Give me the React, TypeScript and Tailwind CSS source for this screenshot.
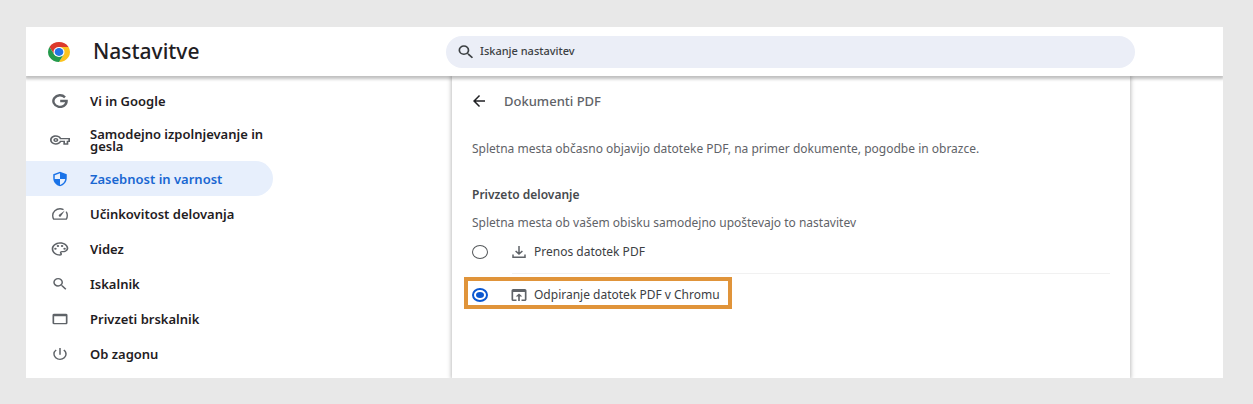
import type { ComponentType } from "react";
import clsx from "clsx";
import {
  MdArrowBack,
  MdOpenInBrowser,
  MdOutlinePalette,
  MdOutlineVpnKey,
  MdPowerSettingsNew,
  MdSearch,
  MdSecurity,
  MdWebAsset,
} from "react-icons/md";

interface IconProps {
  className?: string;
  preserveAspectRatio?: string;
}

interface NavItem {
  label: string;
  icon: ComponentType<IconProps>;
  iconClass: string;
  active?: boolean;
  tall?: boolean;
}

const DownloadIcon = ({ className }: IconProps) => (
  <svg
    viewBox="0 0 14 13"
    preserveAspectRatio="none"
    className={className}
    fill="none"
    stroke="currentColor"
    strokeWidth="1.5"
  >
    <path d="M7 0v8.6M3.6 5.4 7 8.7l3.4-3.3M1 9.2v3h12v-3" />
  </svg>
);

const GoogleIcon = ({ className }: IconProps) => (
  <svg
    viewBox="0 0 16 14"
    preserveAspectRatio="none"
    className={className}
    fill="none"
    stroke="currentColor"
    strokeWidth="2.4"
  >
    <path d="M13 3.300A6.600 5.800 0 1 0 14.600 7H8.200" />
  </svg>
);

const GaugeIcon = ({ className }: IconProps) => (
  <svg
    viewBox="0 0 16 12"
    className={className}
    fill="none"
    stroke="currentColor"
    strokeWidth="1.4"
    strokeLinecap="round"
    strokeLinejoin="round"
  >
    <path d="M11 1.4C10 .9 9 .7 8 .7 4 .7.7 3.700.7 7.400c0 1.400.3 2.500 1 3.700h12.600c.7-1.200 1-2.300 1-3.700 0-1.200-.3-2.200-.9-3.200" />
    <path d="M12.800 2.600 8.900 8.300a1.200 1.200 0 1 1-1.900-1.500z" fill="currentColor" stroke="none" />
  </svg>
);

const ChromeLogo = ({ className }: IconProps) => (
  <svg viewBox="0 0 48 48" preserveAspectRatio="none" className={className}>
    <path d="M24 12h20.780A24 24 0 0 0 3.220 12l10.390 18z" fill="#dc3a2c" />
    <path d="M34.390 30 24 48a24 24 0 0 0 20.780-36H24z" fill="#fcc31e" />
    <path d="M13.610 30 3.220 12A24 24 0 0 0 24 48l10.390-18z" fill="#249a4b" />
    <circle cx="24" cy="24" r="12" fill="#fff" />
    <circle cx="24" cy="24" r="9.500" fill="#2374e4" />
  </svg>
);

const navItems: NavItem[] = [
  { label: "Vi in Google", icon: GoogleIcon, iconClass: "h-3.5 w-4" },
  {
    label: "Samodejno izpolnjevanje in gesla",
    icon: MdOutlineVpnKey,
    iconClass: "h-4 w-5",
    tall: true,
  },
  {
    label: "Zasebnost in varnost",
    icon: MdSecurity,
    iconClass: "h-4 w-[18px]",
    active: true,
  },
  { label: "Učinkovitost delovanja", icon: GaugeIcon, iconClass: "h-3 w-4" },
  { label: "Videz", icon: MdOutlinePalette, iconClass: "h-4 w-5" },
  { label: "Iskalnik", icon: MdSearch, iconClass: "h-4 w-[18px]" },
  { label: "Privzeti brskalnik", icon: MdWebAsset, iconClass: "h-4 w-5" },
  { label: "Ob zagonu", icon: MdPowerSettingsNew, iconClass: "h-4 w-[18px]" },
];

const radioClass =
  "h-3.5 w-4 shrink-0 appearance-none rounded-[50%] border border-[#55585b] bg-clip-content p-[2px] checked:border-2 checked:border-[#0b57d0] checked:bg-[#0b57d0]";

const App = () => {
  return (
    <div className="min-h-screen bg-[#e8e8e8] px-[26px] pt-[27px] pb-[26px] font-['Noto_Sans',sans-serif] text-[#1f2023]">
      <div className="mr-1 flex min-h-[351px] flex-col bg-white">
        {/* Header */}
        <header className="relative grid h-[49px] grid-cols-[420px_minmax(0,1fr)_88px] items-center shadow-[0_2px_3px_1px_rgba(0,0,0,0.25)] [clip-path:inset(0_0_-8px_0)]">
          <div className="flex items-center pl-[22px]">
            <ChromeLogo className="h-5 w-[22px]" />
            <h1 className="ml-[23px] text-[21px] font-medium">Nastavitve</h1>
          </div>
          <div className="flex h-8 items-center rounded-full bg-[#ebeef7] pl-2.5 text-[#3c4043]">
            <MdSearch preserveAspectRatio="none" className="h-[18px] w-5" />
            <input
              type="search"
              aria-label="Iskanje nastavitev"
              placeholder="Iskanje nastavitev"
              className="ml-1 min-w-0 flex-1 bg-transparent text-[11px] font-medium outline-none placeholder:text-[#3c4043]"
            />
          </div>
        </header>

        <div className="grid flex-1 grid-cols-[426px_minmax(0,1fr)_93px] overflow-hidden">
          {/* Sidebar */}
          <nav className="pt-[7px]">
            {navItems.map(({ label, icon: Icon, iconClass, active, tall }) => (
              <a
                key={label}
                href="#"
                className={clsx(
                  "flex w-[247px] items-center rounded-r-full text-[13px] leading-3 font-semibold",
                  tall ? "h-[43px]" : "h-[35px]",
                  active && "bg-[#e7effc] text-[#1967d2]"
                )}
              >
                <span
                  className={clsx(
                    "ml-6 flex w-5 shrink-0 justify-center",
                    active ? "text-[#1a73e8]" : "text-[#5f6368]"
                  )}
                >
                  <Icon preserveAspectRatio="none" className={iconClass} />
                </span>
                <span className="ml-5">{label}</span>
              </a>
            ))}
          </nav>

          {/* PDF documents */}
          <main className="bg-white pr-5 pl-5 text-xs leading-4 text-[#5f6368] shadow-[0_0_4px_1px_rgba(0,0,0,0.25)]">
            <div className="flex h-[50px] items-center">
              <button type="button" aria-label="Nazaj" className="-ml-0.5 text-[#202124]">
                <MdArrowBack preserveAspectRatio="none" className="h-[18px] w-[18px]" />
              </button>
              <h2 className="ml-4 text-[13px] font-medium">Dokumenti PDF</h2>
            </div>

            <p className="mt-[15px]">
              Spletna mesta občasno objavijo datoteke PDF, na primer dokumente,
              pogodbe in obrazce.
            </p>

            <fieldset>
              <legend className="pt-[30px] font-semibold text-[#474a4d]">
                Privzeto delovanje
              </legend>
              <p className="mt-3">
                Spletna mesta ob vašem obisku samodejno upoštevajo to nastavitev
              </p>

              <label className="flex h-[42px] items-center text-[#3c4043]">
                <input type="radio" name="pdf" className={radioClass} />
                <DownloadIcon className="ml-6 h-3 w-3.5 text-[#5f6368]" />
                <span className="ml-2">Prenos datotek PDF</span>
              </label>
              <hr className="ml-10 border-[#f1f1f1]" />
              <label className="mt-[3px] -ml-2 flex h-8 w-fit items-center border-4 border-[#e0943a] pt-1 pr-2 pl-1 text-[#3c4043]">
                <input type="radio" name="pdf" defaultChecked className={radioClass} />
                <MdOpenInBrowser
                  preserveAspectRatio="none"
                  className="ml-[21px] h-[18px] w-5 text-[#5f6368]"
                />
                <span className="ml-[5px]">Odpiranje datotek PDF v Chromu</span>
              </label>
            </fieldset>
          </main>
        </div>
      </div>
    </div>
  );
};

export default App;
